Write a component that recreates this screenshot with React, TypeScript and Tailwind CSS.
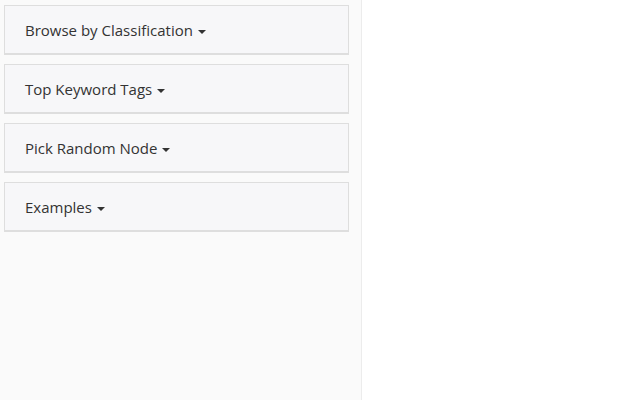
import React from 'react';

const items = ['Browse by Classification', 'Top Keyword Tags', 'Pick Random Node', 'Examples'];

const App: React.FC = () => {
    return (
        <div className="flex h-[400px] w-[640px] bg-white" style={{ fontFamily: '"Open Sans", sans-serif' }}>
            <aside className="flex w-[362px] flex-col gap-[9px] border-r border-[#ececec] bg-[#fafafa] pt-[5px] pl-[4px] pr-[12px]">
                {items.map((label) => (
                    <div
                        key={label}
                        className="flex h-[50px] items-center border border-b-2 border-[#dedede] bg-[#f7f7f9] pl-[20px] pt-[2px] text-[15px] text-[#333]"
                    >
                        <span>{label}</span>
                        <span className="ml-[5px] mt-[2px] inline-block h-0 w-0 border-x-4 border-t-4 border-x-transparent border-t-[#333]" />
                    </div>
                ))}
            </aside>
            <main className="flex-1" />
        </div>
    );
};

export default App;
